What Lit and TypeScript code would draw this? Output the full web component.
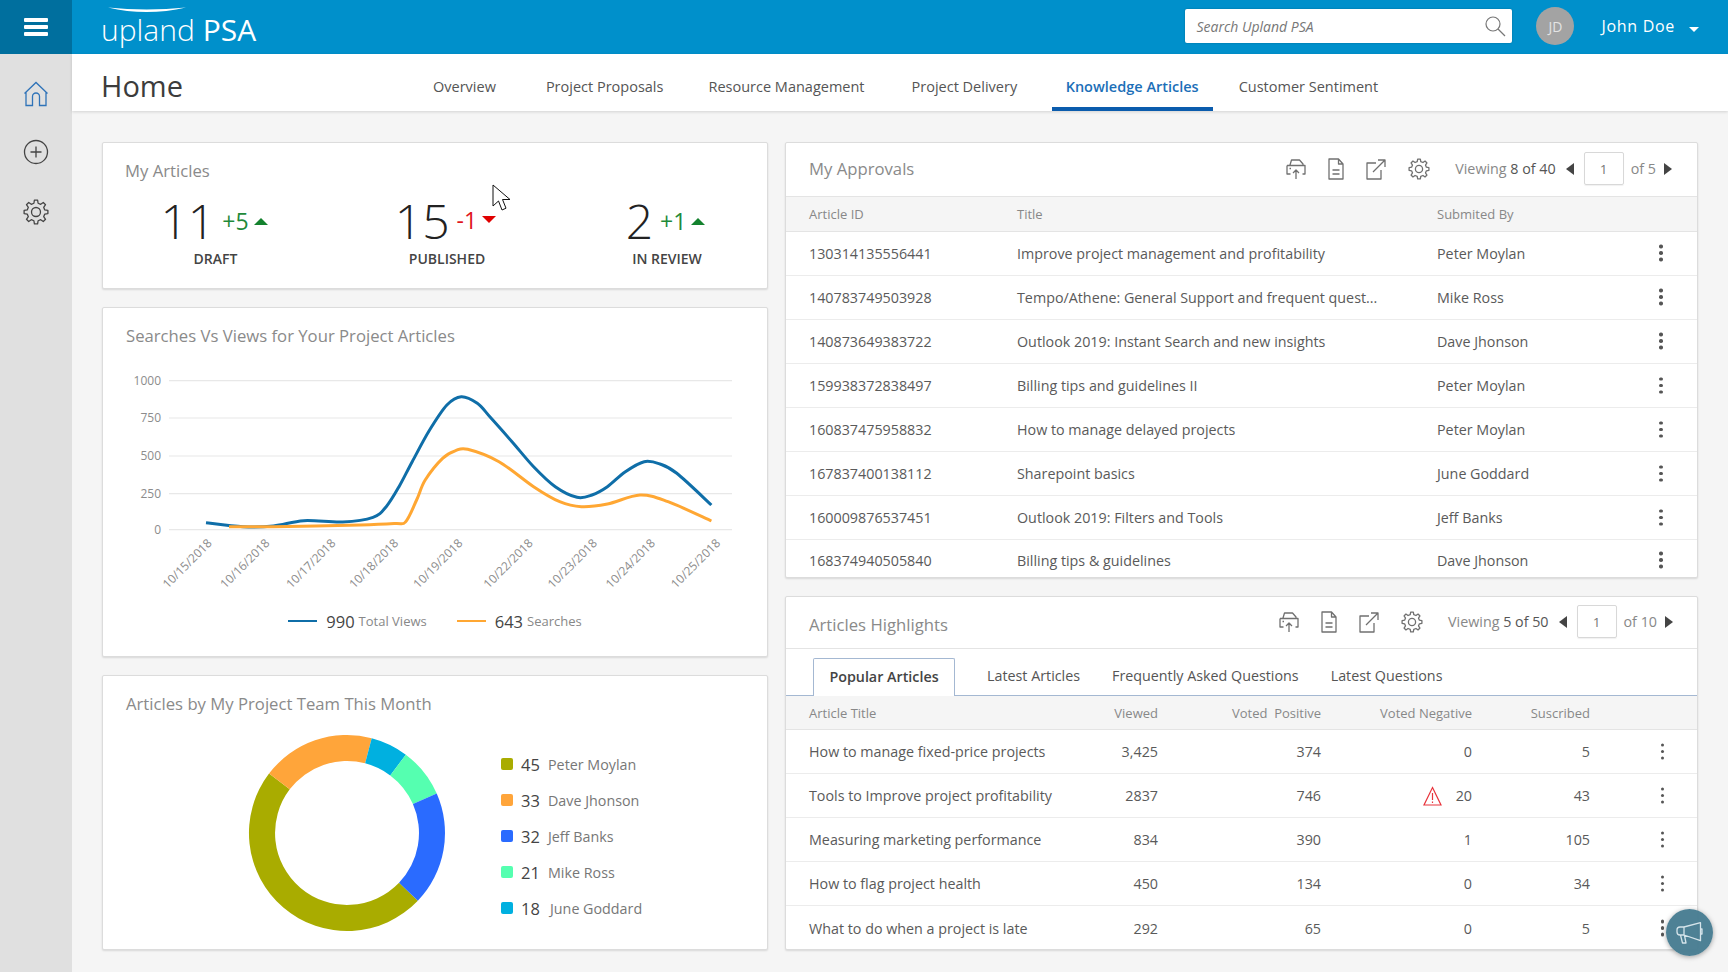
import { LitElement, html, css, svg } from "lit";
import { customElement } from "lit/decorators.js";

type P = [number, number];
function smooth(pts: P[]): string {
  let d = `M${pts[0][0]} ${pts[0][1]}`;
  for (let i = 0; i < pts.length - 1; i++) {
    const p0 = pts[Math.max(0, i - 1)], p1 = pts[i], p2 = pts[i + 1], p3 = pts[Math.min(pts.length - 1, i + 2)];
    const c1x = p1[0] + (p2[0] - p0[0]) / 6, c1y = p1[1] + (p2[1] - p0[1]) / 6;
    const c2x = p2[0] - (p3[0] - p1[0]) / 6, c2y = p2[1] - (p3[1] - p1[1]) / 6;
    d += ` C${c1x.toFixed(1)} ${c1y.toFixed(1)} ${c2x.toFixed(1)} ${c2y.toFixed(1)} ${p2[0]} ${p2[1]}`;
  }
  return d;
}
function gear(cx: number, cy: number, ro: number, ri: number, n: number): string {
  let d = "";
  const step = (Math.PI * 2) / n;
  for (let i = 0; i < n; i++) {
    const a = i * step - Math.PI / 2;
    const pt = (r: number, t: number) => `${(cx + r * Math.cos(t)).toFixed(2)} ${(cy + r * Math.sin(t)).toFixed(2)}`;
    d += `${i === 0 ? "M" : "L"}${pt(ri, a - step * 0.3)} L${pt(ro, a - step * 0.17)} L${pt(ro, a + step * 0.17)} L${pt(ri, a + step * 0.3)} `;
  }
  return d + "Z";
}
function arc(a0: number, a1: number, r0: number, r1: number): string {
  const pt = (r: number, deg: number) => {
    const t = ((deg - 90) * Math.PI) / 180;
    return `${(100 + r * Math.cos(t)).toFixed(2)} ${(100 + r * Math.sin(t)).toFixed(2)}`;
  };
  const large = a1 - a0 > 180 ? 1 : 0;
  return `M${pt(r1, a0)} A${r1} ${r1} 0 ${large} 1 ${pt(r1, a1)} L${pt(r0, a1)} A${r0} ${r0} 0 ${large} 0 ${pt(r0, a0)} Z`;
}

const blue: P[] = [[206,522.7],[243,526.7],[273.5,526],[303.8,520.7],[342.8,522],[373,517.3],[386.2,506.7],[399,486.7],[412.2,461.7],[429.6,430],[446.9,405],[461.2,396.7],[477.3,403.3],[490.3,417.3],[512,441.7],[533.6,466.7],[555.3,486.7],[577,497.3],[592,495],[607.4,486.7],[625,472],[644.2,461.7],[660,464],[676.8,473.3],[711.4,505]];
const orange: P[] = [[229,526.7],[273.5,526.7],[360,525],[395,523.5],[405.7,521.7],[416.6,500],[425.2,480],[442.6,458.3],[455.6,450.7],[467.7,449.3],[499,461.7],[533.6,486.7],[559.7,501.7],[581.4,506.7],[607.4,504],[640,495],[668,501.7],[711.4,521]];

const gridY: [string, number][] = [["1000",380.7],["750",418],["500",456],["250",493.7],["0",529.7]];
const dates: [string, number][] = [["10/15/2018",212.7],["10/16/2018",270.4],["10/17/2018",336.3],["10/18/2018",399.2],["10/19/2018",463.4],["10/22/2018",533.6],["10/23/2018",597.8],["10/24/2018",655.9],["10/25/2018",721]];

const segs: [number, number, string][] = [
  [133.7, 307.3, "#a9ac00"],
  [307.3, 374.6, "#ffa53a"],
  [14.6, 36.9, "#00b0e0"],
  [36.9, 66.3, "#55ffb0"],
  [66.3, 133.7, "#2a6bff"],
];
const team = [
  ["#a9ac00", "45", "Peter Moylan"],
  ["#ffa53a", "33", "Dave Jhonson"],
  ["#2a6bff", "32", "Jeff Banks"],
  ["#55ffb0", "21", "Mike Ross"],
  ["#00b0e0", "18", "June Goddard"],
];
const approvals = [
  ["130314135556441", "Improve project management and profitability", "Peter Moylan"],
  ["140783749503928", "Tempo/Athene: General Support and frequent quest...", "Mike Ross"],
  ["140873649383722", "Outlook 2019: Instant Search and new insights", "Dave Jhonson"],
  ["159938372838497", "Billing tips and guidelines II", "Peter Moylan"],
  ["160837475958832", "How to manage delayed projects", "Peter Moylan"],
  ["167837400138112", "Sharepoint basics", "June Goddard"],
  ["160009876537451", "Outlook 2019: Filters and Tools", "Jeff Banks"],
  ["168374940505840", "Billing tips & guidelines", "Dave Jhonson"],
];
const highlights = [
  ["How to manage fixed-price projects", "3,425", "374", "0", "5", false],
  ["Tools to Improve project profitability", "2837", "746", "20", "43", true],
  ["Measuring marketing performance", "834", "390", "1", "105", false],
  ["How to flag project health", "450", "134", "0", "34", false],
  ["What to do when a project is late", "292", "65", "0", "5", false],
];

const toolIcons = html`
  <svg class="tool" width="22" height="24" viewBox="0 0 22 24"><path d="M5 8 6.500 3H14.500L18 7v1.500M2 8.500H20V17H17.500M2 8.500V17H5.500M4.500 11.500H6M11 22V13M8 16l3-3 3 3"/></svg>
  <svg class="tool" width="20" height="24" viewBox="0 0 20 24"><path d="M3 2h9.500l4.500 5v15H3zM12.500 2v5H17M6.500 13h7M6.500 17h7"/></svg>
  <svg class="tool" width="22" height="24" viewBox="0 0 22 24"><path d="M11 6H2v16h14v-9M8 15 20 3M13 3h7v7"/></svg>
  <svg class="tool gear" width="22" height="24" viewBox="0 0 22 24"><path d="${gear(11, 12, 10, 7.6, 8)}"/><circle cx="11" cy="12" r="3.600"/></svg>`;

@customElement("app-root")
export class AppRoot extends LitElement {
  static styles = css`
    :host { display: block; width: 1728px; height: 972px; overflow: hidden; position: relative; font-family: "Open Sans", "Noto Sans", sans-serif; color: #555; background: #f5f5f5; }
    * { box-sizing: border-box; }
    .top { height: 54px; background: #0090cb; display: flex; align-items: center; }
    .burger { width: 72px; height: 54px; background: #006f9e; display: flex; flex-direction: column; justify-content: center; gap: 3.500px; padding-left: 24px; }
    .burger i { display: block; width: 24px; height: 3.500px; background: #fff; border-radius: 1px; }
    .logo { position: relative; margin-left: 29px; color: #fff; display: flex; gap: 8px; font-size: 30px; line-height: 54px; font-weight: 300; padding-top: 3px; height: 54px; }
    .logo svg { position: absolute; left: 7px; top: 6.500px; }
    .logo .psa { font-size: 30px; font-weight: 400; }
    .search { margin: -2px 0 0 auto; width: 327px; height: 34px; background: #fff; border-radius: 2px; box-shadow: 0 0 2px rgba(0,0,0,.25); display: flex; align-items: center; justify-content: space-between; padding: 0 6px 0 11px; font-style: italic; font-size: 14px; color: #777; }
    .avatar { margin: -2px 0 0 24px; width: 38px; height: 38px; border-radius: 50%; background: #a3a3a3; color: #e4e4e4; display: flex; align-items: center; justify-content: center; font-size: 14px; }
    .user { margin-left: 27px; font-size: 16px; color: #fff; letter-spacing: .7px; font-weight: 500; margin-top: -3px; }
    .caret { margin: 4px 29px 0 14px; border: 5px solid transparent; border-top: 5px solid #fff; border-bottom: 0; width: 0; height: 0; }
    .shell { display: flex; height: 918px; }
    .side { width: 72px; background: #e0e0e0; display: flex; flex-direction: column; align-items: center; padding-top: 27px; gap: 32px; flex: none; }
    .side svg:last-child { margin-top: 2px; }
    .main { flex: 1; min-width: 0; }
    .head { height: 57px; background: #fff; box-shadow: 0 1px 3px rgba(0,0,0,.14); display: flex; align-items: stretch; position: relative; }
    h1 { margin: 0 0 0 29px; font-size: 29px; font-weight: 400; color: #3c3c3c; line-height: 64px; height: 57px; width: 318px; flex: none; }
    .nav { display: flex; gap: 19px; }
    .nav a { padding: 0 14px; font-size: 14.500px; line-height: 66px; height: 57px; color: #555; white-space: nowrap; }
    .nav a.on { color: #1c6fb8; font-weight: 600; border-bottom: 4px solid #0b5cad; }
    .nav .n2 { margin-left: 3px; }
    .nav .n3 { margin-left: -2px; }
    .nav .n5 { margin-left: 1.500px; }
    .nav .n6 { margin-left: -7px; }
    .content { display: grid; grid-template-columns: 666px 913px; gap: 17px; padding: 31px 30px 0; }
    .col { display: flex; flex-direction: column; gap: 18px; }
    .card { background: #fff; border: 1px solid #dcdcdc; border-radius: 2px; box-shadow: 0 1px 2px rgba(0,0,0,.12); overflow: hidden; }
    .title { font-size: 16.700px; line-height: 22px; color: #8a8a8a; white-space: nowrap; }
    .articles { height: 147px; padding: 17px 0 0; }
    .articles .title { padding-left: 22px; }
    .kpis { display: grid; grid-template-columns: 225px 238px 202px; margin-top: 11px; }
    .kpi { display: flex; flex-direction: column; align-items: center; }
    .kpi-row { display: flex; align-items: center; height: 56px; margin-left: -3px; }
    .big { font-size: 48px; line-height: 56px; font-weight: 300; color: #222; margin-right: 7px; }
    .delta { font-size: 23px; margin-right: 5px; }
    .up { color: #1f8a3a; }
    .down { color: #e0141c; margin-top: -3px; }
    .tri { width: 0; height: 0; border-left: 7px solid transparent; border-right: 7px solid transparent; }
    .tri.u { border-bottom: 7px solid #14822e; }
    .tri.d { border-top: 7px solid #e00000; margin-top: -3px; }
    .label { font-size: 14px; line-height: 20px; font-weight: 600; color: #444; }
    .search-card { height: 350px; padding: 17px 0 0 23px; }
    .chart { display: block; margin: 13px 0 0 -23px; }
    .chart text { font-family: "Open Sans", sans-serif; font-size: 12px; fill: #8c8c8c; }
    .legend { display: flex; justify-content: center; margin: 9px 0 0 -23px; gap: 30px; height: 24px; align-items: center; }
    .leg { display: flex; align-items: center; }
    .leg i { display: block; width: 29px; height: 2.500px; margin-right: 9px; }
    .leg b { font-weight: 400; font-size: 16.500px; color: #444; margin-right: 4px; }
    .leg span { font-size: 13px; color: #888; }
    .team { height: 275px; padding: 17px 0 0 23px; }
    .team-body { display: flex; align-items: center; margin: 18px 0 0 121px; }
    .names { margin: 6px 0 0 54px; display: flex; flex-direction: column; gap: 12px; }
    .nm { display: flex; align-items: center; height: 24px; }
    .nm i { display: block; width: 12px; height: 12px; border-radius: 2px; margin-right: 8px; }
    .nm b { font-weight: 400; font-size: 16.500px; color: #444; width: 27px; }
    .nm span { font-size: 14.300px; color: #777; }
    .nm.extra span { margin-left: 2px; }
    .approvals { height: 436px; }
    .hl { height: 354px; }
    .bar { display: flex; align-items: center; padding-left: 23px; height: 54px; border-bottom: 1px solid #e4e4e4; }
    .hl .bar { height: 52px; }
    .bar .title { flex: 1; margin-top: -2px; }
    .hl .bar .title { margin-top: 0; padding-top: 5px; }
    .tools { display: flex; align-items: center; gap: 19px; margin-right: 25.500px; margin-top: -2px; }
    .hl .tools { margin-right: 25px; margin-top: -2px; }
    .gear { margin-left: 2px; }
    .tool { fill: none; stroke: #707070; stroke-width: 1.300; stroke-linejoin: round; display: block; }
    .pager { display: flex; align-items: center; font-size: 14.300px; color: #888; margin-right: 25px; margin-top: -2px; }
    .hl .pager { margin-right: 24px; margin-top: -2px; }
    .pager b { font-weight: 400; color: #555; }
    .pager .box { width: 40px; height: 33px; border: 1px solid #d8d8d8; border-radius: 2px; display: flex; align-items: center; justify-content: center; margin: 0 7px 0 10px; color: #777; font-size: 13.500px; box-shadow: 0 1px 1px rgba(0,0,0,.06); }
    .tl { margin-left: 10px; border: 6px solid transparent; border-right: 8px solid #444; border-left: 0; }
    .tr { margin-left: 8px; border: 6px solid transparent; border-left: 8px solid #444; border-right: 0; }
    .thead { background: #f5f5f5; color: #888; font-size: 13px; height: 34.500px; border-bottom: 1px solid #e4e4e4; padding-top: 1px; }
    .row { display: grid; align-items: center; padding-left: 23px; white-space: nowrap; }
    .app { grid-template-columns: 208px 420px 1fr 72px; }
    .body { height: 44.100px; border-bottom: 1.500px solid #ececec; font-size: 14.300px; color: #5a5a5a; }
    .body:last-child { border-bottom: 0; }
    .app.body:last-child { height: 40px; }
    .keb { justify-self: center; width: 3.500px; height: 3.500px; border-radius: 50%; background: #555; box-shadow: 0 -6.500px 0 #555, 0 6.500px 0 #555; }
    .tabs { display: flex; height: 47px; padding: 9px 0 0 27px; border-bottom: 1.500px solid #a4b8d2; font-size: 14.300px; color: #555; }
    .tabs span { line-height: 36px; }
    .tabs .active { width: 142px; height: 38px; text-align: center; font-weight: 600; color: #444; border: 1px solid #a4b8d2; border-bottom: 0; background: #fff; margin-right: 32px; border-radius: 2px 2px 0 0; }
    .tabs .p { margin-right: 32px; }
    .hlg { grid-template-columns: 239px 110px 163px 151px 118px 1fr; }
    .num { text-align: right; display: flex; justify-content: flex-end; align-items: center; }
    .num svg { margin-right: 14px; }
    .hlg .keb { justify-self: end; margin-right: 33px; }
    .hl .body { height: 44px; }
    .hl .thead { height: 34px; padding-top: 0; }
    .pointer { position: absolute; left: 492px; top: 184px; }
    .fab { position: absolute; left: 1666px; top: 909px; width: 47px; height: 47px; border-radius: 50%; background: rgba(68,122,143,.95); box-shadow: 0 1px 5px rgba(0,0,0,.35); display: flex; align-items: center; justify-content: center; }
  `;

  render() {
    return html`
      <div class="top">
        <div class="burger"><i></i><i></i><i></i></div>
        <div class="logo">
          <svg width="78" height="7" viewBox="0 0 78 7"><path d="M0 .5C25 3 52 3 78 .5C52 6.500 25 6.500 0 .5Z" fill="#fff"/></svg>
          <span>upland</span><span class="psa">PSA</span>
        </div>
        <div class="search">
          <span>Search Upland PSA</span>
          <svg width="22" height="22" viewBox="0 0 22 22" fill="none" stroke="#777" stroke-width="1.200"><circle cx="9" cy="9" r="7"/><path d="M14 14l7 7"/></svg>
        </div>
        <div class="avatar">JD</div>
        <div class="user">John Doe</div>
        <div class="caret"></div>
      </div>
      <div class="shell">
        <div class="side">
          <svg width="26" height="26" viewBox="0 0 26 26" fill="none" stroke="#2f73b8" stroke-width="1.300"><path d="M1.500 12.500 13 1.500l11.500 11M3 11v13.500h6.500V15.500a3.500 3.500 0 0 1 7 0v9H23V11"/></svg>
          <svg width="26" height="26" viewBox="0 0 26 26" fill="none" stroke="#444" stroke-width="1.300"><circle cx="13" cy="13" r="11.500"/><path d="M13 7.500v11M7.500 13h11"/></svg>
          <svg width="26" height="26" viewBox="0 0 26 26" fill="none" stroke="#444" stroke-width="1.300" stroke-linejoin="round"><path d="${gear(13, 13, 12, 9, 8)}"/><circle cx="13" cy="13" r="4.500"/></svg>
        </div>
        <div class="main">
          <div class="head">
            <h1>Home</h1>
            <div class="nav">
              <a>Overview</a><a class="n2">Project Proposals</a><a class="n3">Resource Management</a><a>Project Delivery</a><a class="on n5">Knowledge Articles</a><a class="n6">Customer Sentiment</a>
            </div>
          </div>
          <div class="content">
            <div class="col">
              <div class="card articles">
                <div class="title">My Articles</div>
                <div class="kpis">
                  <div class="kpi"><div class="kpi-row"><span class="big">11</span><span class="delta up">+5</span><i class="tri u"></i></div><div class="label">DRAFT</div></div>
                  <div class="kpi"><div class="kpi-row"><span class="big">15</span><span class="delta down">-1</span><i class="tri d"></i></div><div class="label">PUBLISHED</div></div>
                  <div class="kpi"><div class="kpi-row"><span class="big">2</span><span class="delta up">+1</span><i class="tri u"></i></div><div class="label">IN REVIEW</div></div>
                </div>
              </div>
              <div class="card search-card">
                <div class="title">Searches Vs Views for Your Project Articles</div>
                <svg class="chart" width="663" height="240" viewBox="103 360 663 240">
                  ${gridY.map(([t, y]) => svg`<line x1="169" x2="732" y1=${y} y2=${y} stroke="#e8e8e8" stroke-width="1.200"/><text x="161" y=${y + 4} text-anchor="end">${t}</text>`)}
                  ${dates.map(([t, x]) => svg`<text text-anchor="end" transform="translate(${x} 544) rotate(-45)">${t}</text>`)}
                  <path d=${smooth(blue)} fill="none" stroke="#0f6ea8" stroke-width="3"/>
                  <path d=${smooth(orange)} fill="none" stroke="#ffa733" stroke-width="3"/>
                </svg>
                <div class="legend">
                  <div class="leg"><i style="background:#0f6ea8"></i><b>990</b><span>Total Views</span></div>
                  <div class="leg"><i style="background:#ffa733"></i><b>643</b><span>Searches</span></div>
                </div>
              </div>
              <div class="card team">
                <div class="title">Articles by My Project Team This Month</div>
                <div class="team-body">
                  <svg width="200" height="200" viewBox="0 0 200 200">
                    ${segs.map(([a, b, c]) => svg`<path d=${arc(a, b, 72, 98)} fill=${c}/>`)}
                  </svg>
                  <div class="names">
                    ${team.map(([c, n, t], i) => html`<div class="nm ${i === 4 ? "extra" : ""}"><i style="background:${c}"></i><b>${n}</b><span>${t}</span></div>`)}
                  </div>
                </div>
              </div>
            </div>
            <div class="col">
              <div class="card approvals">
                <div class="bar">
                  <div class="title">My Approvals</div>
                  <div class="tools">${toolIcons}</div>
                  <div class="pager">Viewing&nbsp;<b>8 of 40</b><i class="tl"></i><span class="box">1</span>of 5<i class="tr"></i></div>
                </div>
                <div class="row app thead"><span>Article ID</span><span>Title</span><span style="grid-column:3">Submited By</span></div>
                ${approvals.map(r => html`<div class="row app body"><span>${r[0]}</span><span>${r[1]}</span><span>${r[2]}</span><i class="keb"></i></div>`)}
              </div>
              <div class="card hl">
                <div class="bar">
                  <div class="title">Articles Highlights</div>
                  <div class="tools">${toolIcons}</div>
                  <div class="pager">Viewing&nbsp;<b>5 of 50</b><i class="tl"></i><span class="box">1</span>of 10<i class="tr"></i></div>
                </div>
                <div class="tabs"><span class="active">Popular Articles</span><span class="p">Latest Articles</span><span class="p">Frequently Asked Questions</span><span>Latest Questions</span></div>
                <div class="row hlg thead"><span>Article Title</span><span class="num">Viewed</span><span class="num">Voted&nbsp;&nbsp;Positive</span><span class="num">Voted Negative</span><span class="num">Suscribed</span></div>
                ${highlights.map(r => html`<div class="row hlg body"><span>${r[0]}</span><span class="num">${r[1]}</span><span class="num">${r[2]}</span><span class="num">${r[5] ? html`<svg width="19" height="20" viewBox="0 0 19 20" fill="none" stroke="#e8343c" stroke-width="1.200"><path d="M9.500 1.500 18 19H1ZM9.500 7v7M9.500 15.500v1.500"/></svg>` : ""}${r[3]}</span><span class="num">${r[4]}</span><i class="keb"></i></div>`)}
              </div>
            </div>
          </div>
        </div>
      </div>
      <svg class="pointer" width="20" height="28" viewBox="0 0 20 28"><path d="M1 1v21l5.500-5 3.500 9 4-1.800-3.500-8.700h7.500Z" fill="#fff" stroke="#111" stroke-width="1"/></svg>
      <div class="fab">
        <svg width="28" height="28" viewBox="0 0 28 28" fill="none" stroke="#d5e4ea" stroke-width="1.300" stroke-linejoin="round"><path d="M8 8 24.500 3.700V21.700L8 16ZM8 8H4a3 3 0 0 0-3 3v2a3 3 0 0 0 3 3H8M8 8v8M24.500 10H26v5H24.500M4.500 16l2 8h3.500L8.500 16.500"/></svg>
      </div>
    `;
  }
}
